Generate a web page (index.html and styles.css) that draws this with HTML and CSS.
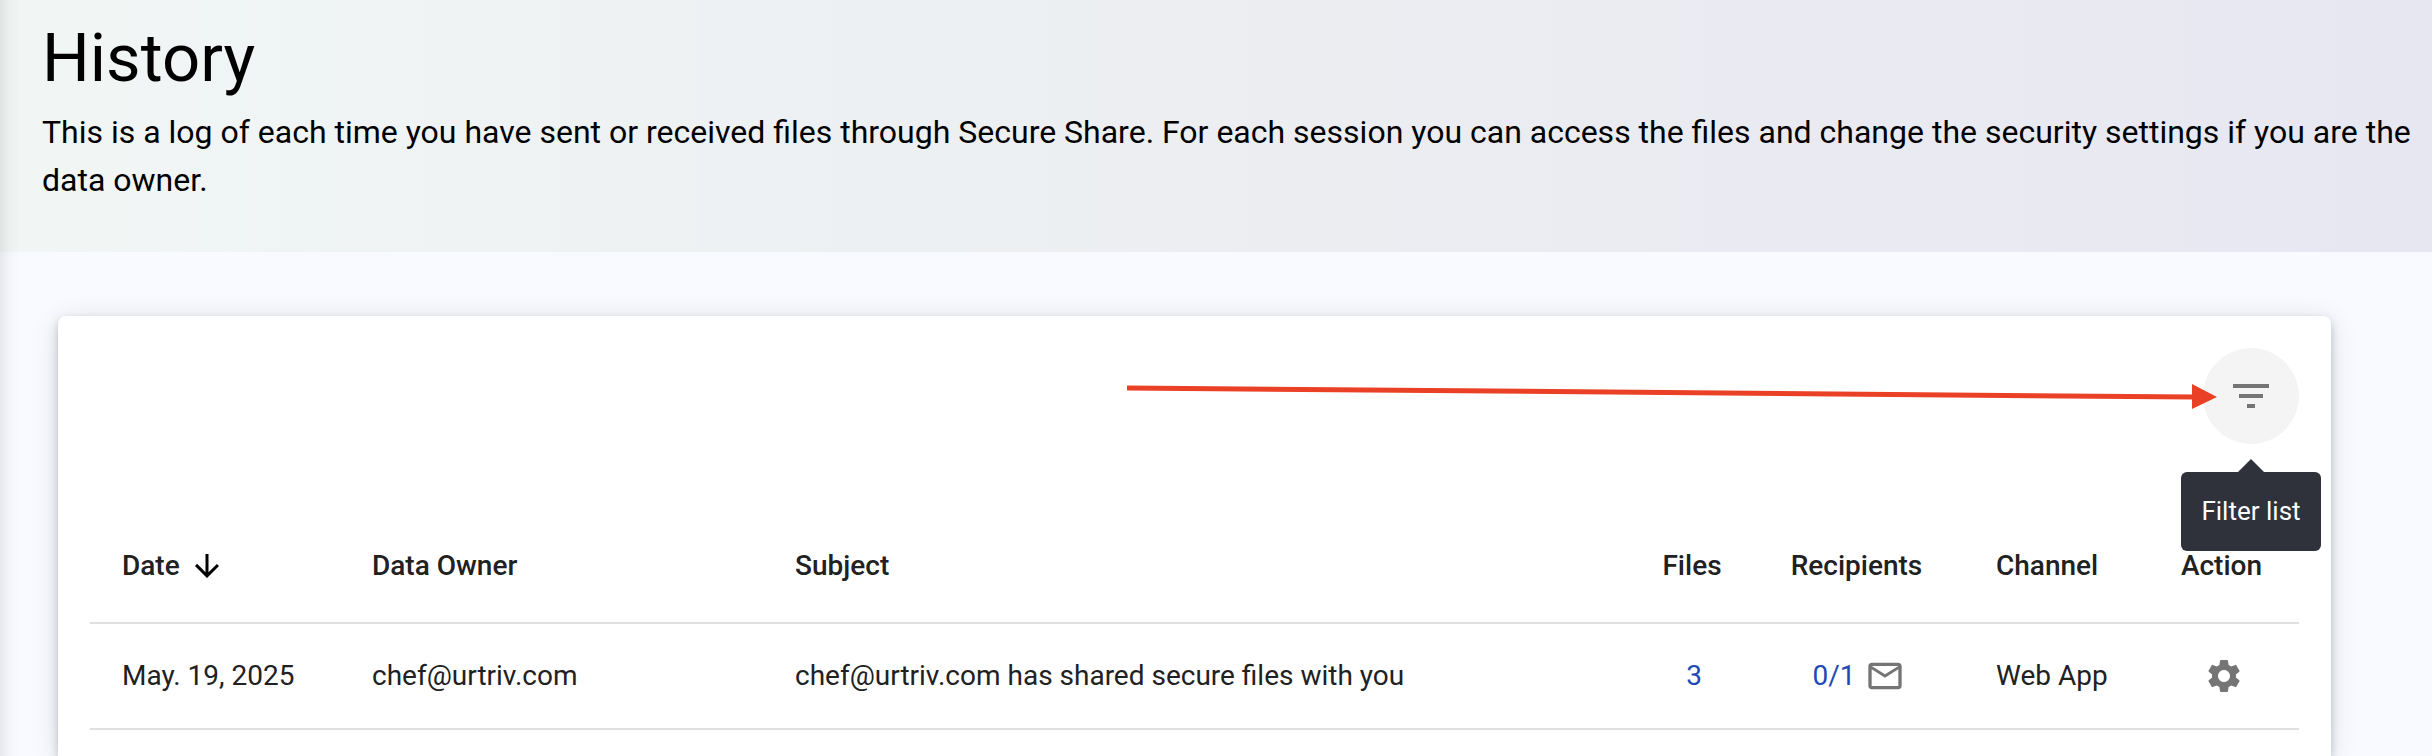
FILE: index.html
```html
<!DOCTYPE html>
<html lang="en">
<head>
    <meta charset="UTF-8">
    <meta name="viewport" content="width=device-width, initial-scale=1.0">
    <title>History</title>
    <link rel="stylesheet" href="styles.css">
</head>
<body>
    <header class="page-header">
        <h1>History</h1>
        <p>This is a log of each time you have sent or received files through Secure Share. For each session you can access the files and change the security settings if you are the data owner.</p>
    </header>

    <main class="card">
        <div class="toolbar">
            <svg class="pointer" viewBox="0 0 1092 26" aria-hidden="true">
                <path d="M2 4L1068 13" stroke="#ea4025" stroke-width="5"/>
                <path d="M1067 0v25l25-12z" fill="#ea4025"/>
            </svg>
            <div class="filter">
                <button class="filter-button" type="button" aria-describedby="filter-tip" aria-label="Filter list">
                    <svg class="icon" viewBox="0 0 24 24"><path d="M10 18h4v-2h-4v2zM3 6v2h18V6H3zm3 7h12v-2H6v2z"/></svg>
                </button>
                <div class="tooltip" id="filter-tip" role="tooltip">Filter list</div>
            </div>
        </div>

        <table class="history">
            <colgroup>
                <col class="col-date">
                <col class="col-owner">
                <col class="col-subject">
                <col class="col-files">
                <col class="col-recipients">
                <col class="col-channel">
                <col class="col-action">
            </colgroup>
            <thead>
                <tr>
                    <th>
                        <button class="sort" type="button">Date
                            <svg class="sort-icon" viewBox="0 0 24 24"><path d="M20 12l-1.41-1.41L13 16.17V4h-2v12.17l-5.58-5.59L4 12l8 8 8-8z"/></svg>
                        </button>
                    </th>
                    <th>Data Owner</th>
                    <th>Subject</th>
                    <th class="center">Files</th>
                    <th class="center">Recipients</th>
                    <th>Channel</th>
                    <th class="center">Action</th>
                </tr>
            </thead>
            <tbody>
                <tr>
                    <td>May. 19, 2025</td>
                    <td>chef@urtriv.com</td>
                    <td>chef@urtriv.com has shared secure files with you</td>
                    <td class="center"><a href="#">3</a></td>
                    <td class="center">
                        <div class="recipients">
                            <a href="#">0/1</a>
                            <svg class="mail-icon" viewBox="0 0 24 24"><path d="M22 6c0-1.100-.9-2-2-2H4c-1.100 0-2 .9-2 2v12c0 1.100.9 2 2 2h16c1.100 0 2-.9 2-2V6zm-2 0l-8 5-8-5h16zm0 12H4V8l8 5 8-5v10z"/></svg>
                        </div>
                    </td>
                    <td>Web App</td>
                    <td class="center">
                        <button class="settings" type="button" aria-label="Settings">
                            <svg viewBox="0 0 24 24"><path d="M19.140 12.940c.04-.3.06-.61.06-.94 0-.32-.02-.64-.07-.94l2.030-1.580c.18-.14.23-.41.12-.61l-1.920-3.320c-.12-.22-.37-.29-.59-.22l-2.390.96c-.5-.38-1.030-.7-1.620-.94l-.36-2.540c-.04-.24-.24-.41-.48-.41h-3.840c-.24 0-.43.17-.47.41l-.36 2.540c-.59.24-1.130.57-1.620.94l-2.390-.96c-.22-.08-.47 0-.59.22L2.740 8.870c-.12.21-.08.47.12.61l2.030 1.580c-.05.3-.09.63-.09.94s.02.64.07.94l-2.030 1.580c-.18.14-.23.41-.12.61l1.920 3.320c.12.22.37.29.59.22l2.390-.96c.5.38 1.030.7 1.620.94l.36 2.540c.05.24.24.41.48.41h3.840c.24 0 .44-.17.47-.41l.36-2.540c.59-.24 1.130-.56 1.620-.94l2.390.96c.22.08.47 0 .59-.22l1.920-3.320c.12-.22.07-.47-.12-.61l-2.010-1.580zM12 15.600c-1.980 0-3.600-1.620-3.600-3.600s1.620-3.600 3.600-3.600 3.600 1.620 3.600 3.600-1.620 3.600-3.600 3.600z"/></svg>
                        </button>
                    </td>
                </tr>
            </tbody>
        </table>
    </main>
</body>
</html>
```

FILE: styles.css
```css
* {
    box-sizing: border-box;
}
body {
    margin: 0;
    min-height: 100vh;
    display: flex;
    flex-direction: column;
    font-family: Roboto, sans-serif;
    color: #212121;
    background: #f9faff;
}
/* shadow cast by the side menu */
body::before {
    content: "";
    position: fixed;
    top: 0;
    bottom: 0;
    left: 0;
    width: 20px;
    background: linear-gradient(to right, rgba(0, 0, 0, 0.07), rgba(0, 0, 0, 0.02) 50%, transparent);
}
.page-header {
    padding: 18px 8px 48px 42px;
    color: #000;
    background: linear-gradient(to right, #f1f6f5, #eceef1 50%, #e7e7f2);
}
.page-header h1 {
    margin: 0;
    font-size: 67px;
    font-weight: 400;
    line-height: 80px;
}
.page-header p {
    margin: 10px 0 0;
    font-size: 32px;
    line-height: 48px;
}
.card {
    flex: 1;
    margin: 64px 101px 0 58px;
    padding: 32px 32px 0;
    background: #fff;
    border-radius: 8px 8px 0 0;
    box-shadow: 0 4px 8px rgba(0, 0, 0, 0.2), 0 4px 28px rgba(0, 0, 0, 0.12);
}
.toolbar {
    position: relative;
    display: flex;
    justify-content: flex-end;
    height: 164px;
}
.pointer {
    position: absolute;
    z-index: 1;
    top: 36px;
    right: 82px;
    width: 1092px;
    height: 26px;
}
.filter {
    position: relative;
    width: 96px;
    height: 96px;
}
.filter-button {
    display: flex;
    align-items: center;
    justify-content: center;
    width: 100%;
    height: 100%;
    padding: 0;
    border: 0;
    border-radius: 50%;
    background: #f4f4f4;
}
.icon {
    width: 48px;
    height: 48px;
    fill: #757575;
}
.tooltip {
    position: absolute;
    z-index: 2;
    top: 124px;
    left: 50%;
    width: 140px;
    transform: translateX(-50%);
    border-radius: 6px;
    background: #2f323b;
    color: #fff;
    font-size: 26px;
    line-height: 79px;
    text-align: center;
    white-space: nowrap;
}
.tooltip::before {
    content: "";
    position: absolute;
    bottom: 100%;
    left: 50%;
    margin-left: -13px;
    border: 13px solid transparent;
    border-top: 0;
    border-bottom-color: #2f323b;
}
.history {
    width: 100%;
    table-layout: fixed;
    border-collapse: collapse;
    font-size: 28px;
    line-height: 40px;
}
.col-date {
    width: 250px;
}
.col-owner {
    width: 423px;
}
.col-files {
    width: 118px;
}
.col-recipients {
    width: 211px;
}
.col-channel {
    width: 184px;
}
.col-action {
    width: 151px;
}
.history th,
.history td {
    height: 106px;
    padding: 0 0 0 32px;
    border-bottom: 2px solid #e0e0e0;
    text-align: left;
    white-space: nowrap;
}
.history th {
    height: 111px;
    padding-bottom: 3px;
    font-weight: 500;
}
.history .center {
    padding-left: 0;
    text-align: center;
}
.history th.center {
    padding-right: 4px;
}
.history a {
    color: #1f49b6;
    text-decoration: none;
}
.sort {
    display: flex;
    align-items: center;
    gap: 9px;
    padding: 0;
    border: 0;
    background: none;
    color: inherit;
    font: inherit;
}
.sort-icon {
    width: 36px;
    height: 36px;
    fill: #000;
}
.recipients {
    display: flex;
    align-items: center;
    justify-content: center;
    gap: 9px;
}
.mail-icon {
    width: 40px;
    height: 40px;
    fill: #757575;
}
.settings {
    display: block;
    margin: 0 auto;
    padding: 0;
    border: 0;
    background: none;
}
.settings svg {
    display: block;
    width: 40px;
    height: 40px;
    fill: #757575;
}
```
